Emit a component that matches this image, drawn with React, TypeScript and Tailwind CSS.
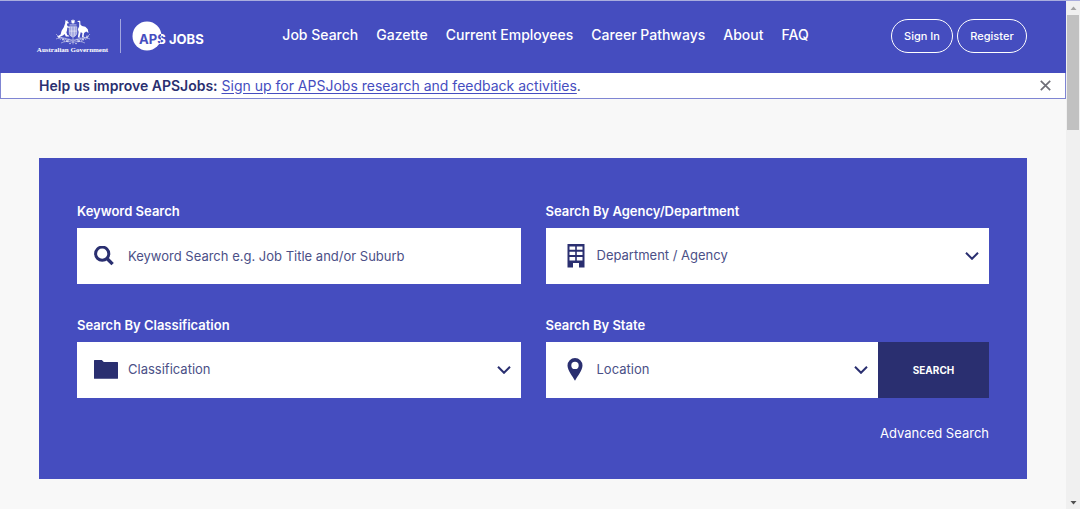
import { useState } from 'react';
import type { ReactNode } from 'react';

const navLinks = ['Job Search', 'Gazette', 'Current Employees', 'Career Pathways', 'About', 'FAQ'];

function CoatOfArms() {
  return (
    <svg className="h-7 w-9" viewBox="0 0 36 27" fill="#fff" aria-hidden="true">
      {/* Star */}
      <path d="M18 0.6l.6 1.3 1.4-.3-.6 1.3 1.1.9-1.4.3v1.4L18 4.600l-1.100.9v-1.400l-1.400-.3 1.100-.9-.6-1.300 1.400.3z" />
      <path d="M14.500 6h7v.9h-7z" opacity=".8" />
      {/* Kangaroo */}
      <path d="M10.600 1.200l.9 1.300.9-1 .1 1.500 1.300 1-.4.900-1.500.2.500 2.400 2.200.9-.2.900-2.100-.4-.3 3-.6 2 .9 2.600 1.900.7v.8H10.900l-1.400-2.600-1.200 1.300-3.600 1.700-2.300-.2 3.200-2.200 1-3.700 2.200-3.600 1.300-3.700z" />
      {/* Shield */}
      <path d="M14.200 8.200h7.600v6c0 2.200-1.500 3.500-3.800 4.600-2.300-1.100-3.800-2.400-3.800-4.600z" opacity=".5" />
      <path d="M14.200 8.200h7.600v6c0 2.200-1.500 3.500-3.800 4.600-2.300-1.100-3.800-2.400-3.800-4.600zM14.200 12.600h7.600M16.700 8.200v9.400M19.300 8.200v9.400" fill="none" stroke="#fff" strokeWidth=".5" />
      {/* Emu */}
      <path d="M22.700 2.700l1.500-.7 1.100.8.100 3.300 1.600 1.500 3.300.6 2.500 2.600.7 3.600-2.300-1.300-2.100 1.300-.6 3.500 1.500.9h-3l.4-4.400-1.700-.7-1.100 4.500 1 .8h-2.800l.9-5.600-.9-2.600 1.300-2.900.2-4-.5-.5-1.500.2z" />
      {/* Wattle */}
      <g fill="none" stroke="#fff" strokeWidth=".6" opacity=".75">
        <path d="M1 15.500c3 3.800 8 5.500 17 6 9-.5 14-2.200 17-6" />
        <path d="M1 20.500c5-2.500 11-1 17 2.500 6-3.500 12-5 17-2.500" />
        <path d="M6 24.500c4-2 8-2 12-.5 4-1.500 8-1.500 12 .5" />
        <path d="M2 18l3-.5M5 21.500l2-3M9 23.500l1.500-3.500M13 24l1-4M34 18l-3-.5M31 21.500l-2-3M27 23.500L25.500 20M23 24l-1-4M18 19v7" />
      </g>
      <g opacity=".75">
        <circle cx="4" cy="19" r=".9" />
        <circle cx="8" cy="21" r="1" />
        <circle cx="12" cy="22.500" r="1" />
        <circle cx="15" cy="25" r=".8" />
        <circle cx="21" cy="25" r=".8" />
        <circle cx="24" cy="22.500" r="1" />
        <circle cx="28" cy="21" r="1" />
        <circle cx="32" cy="19" r=".9" />
      </g>
    </svg>
  );
}

function ApsLogo() {
  return (
    <svg className="h-[30px] w-[76px]" viewBox="0 0 76 30" role="img" aria-label="APS Jobs">
      <defs>
        {/* blue inside the circle, white past its edge */}
        <radialGradient id="aps-ink" gradientUnits="userSpaceOnUse" cx="15" cy="15" r="14.500">
          <stop offset="1" stopColor="#454dbf" />
          <stop offset="1" stopColor="#fff" />
        </radialGradient>
      </defs>
      <circle cx="15" cy="15" r="14.500" fill="#fff" />
      <text x="7" y="23" fontSize="13" fontWeight="700" fontFamily="Inter, sans-serif" fill="url(#aps-ink)">APS</text>
      <text x="37" y="23" fontSize="13" fontWeight="700" fontFamily="Inter, sans-serif" fill="#fff">JOBS</text>
    </svg>
  );
}

function SearchIcon() {
  return (
    <svg className="h-5 w-5" viewBox="0 0 20 20" fill="none" stroke="#2a2f70" aria-hidden="true">
      <circle cx="8.200" cy="7.700" r="6.600" strokeWidth="3" />
      <path d="M13 12.500l5.600 5.600" strokeWidth="3.400" />
    </svg>
  );
}

function BuildingIcon() {
  return (
    <svg className="h-6 w-[18px]" viewBox="0 0 18 24" aria-hidden="true">
      <path
        fill="#2a2f70"
        fillRule="evenodd"
        d="M.5 0h17v23.500h-5.500v-4.500H6v4.500H.5zM2.500 2.500v3.200h5.700V2.500zM9.800 2.500v3.200h5.700V2.500zM2.500 7.700v3.300h5.700V7.700zM9.800 7.700v3.300h5.700V7.700zM2.500 13v3.500h5.700V13zM9.800 13v3.500h5.700V13z"
      />
    </svg>
  );
}

function FolderIcon() {
  return (
    <svg className="h-5 w-6" viewBox="0 0 24 20" aria-hidden="true">
      <path fill="#2a2f70" d="M.6 0h7.200l2 2h13.600q.6 0 .6.600v15.600q0 .6-.6.600H.6q-.6 0-.6-.6V.6Q0 0 .6 0z" />
    </svg>
  );
}

function PinIcon() {
  return (
    <svg className="h-6 w-4" viewBox="0 0 16 24" aria-hidden="true">
      <path
        fill="#2a2f70"
        fillRule="evenodd"
        d="M8 0a7.500 7.500 0 0 1 7.500 7.500C15.500 12.200 10.500 18.200 8 22.700 5.500 18.200.5 12.200.5 7.500A7.500 7.500 0 0 1 8 0zM8 3.700a3.700 3.700 0 1 0 0 7.400 3.700 3.700 0 0 0 0-7.400z"
      />
    </svg>
  );
}

function Chevron() {
  return (
    <svg className="pointer-events-none h-2 w-[14px] shrink-0" viewBox="0 0 14 8" fill="none" aria-hidden="true">
      <path d="M1 .800l6 6 6-6" stroke="#2a2f70" strokeWidth="2" />
    </svg>
  );
}

function Field({ id, label, icon, children }: { id: string; label: string; icon: ReactNode; children: ReactNode }) {
  return (
    <div>
      <label htmlFor={id} className="block text-[13px] leading-4 font-semibold text-white">
        {label}
      </label>
      <div className="mt-[9px] flex h-14">
        <div className="flex min-w-0 flex-1 items-center bg-white pr-[10px] pl-[17px]">
          <span className="flex w-[34px] shrink-0">{icon}</span>
          {children}
        </div>
        {id === 'state' && (
          <button className="w-[111px] bg-[#2a2f70] text-[10px] font-bold text-white">SEARCH</button>
        )}
      </div>
    </div>
  );
}

function SelectBox({ id, placeholder }: { id: string; placeholder: string }) {
  return (
    <>
      <select id={id} className="h-full min-w-0 flex-1 appearance-none bg-transparent text-[13px] text-[#4b5087] outline-none">
        <option>{placeholder}</option>
      </select>
      <Chevron />
    </>
  );
}

export default function App() {
  const [showBanner, setShowBanner] = useState(true);

  return (
    <div className="flex min-h-screen border-t border-[#a9adde] bg-[#f8f8f8] font-['Inter',sans-serif]">
      <div className="min-w-0 flex-1">
        {/* Header */}
        <header className="flex h-18 items-center justify-between bg-[#454dbf] px-[39px] pb-[2px] text-white">
          <a href="#" className="flex items-center">
            <span className="flex w-[67px] flex-col items-center">
              <CoatOfArms />
              <span className="font-['Liberation_Serif',serif] text-[7px] leading-[8px] font-bold whitespace-nowrap">
                Australian Government
              </span>
            </span>
            <span className="mr-[11px] ml-[14px] h-[34px] w-px bg-[#a2a6df]" />
            <ApsLogo />
          </a>
          <nav className="flex gap-[18px] pr-2 pb-[2px] text-[14px] leading-5 font-medium whitespace-nowrap">
            {navLinks.map((link) => (
              <a key={link} href="#">
                {link}
              </a>
            ))}
          </nav>
          <div className="flex gap-1 text-[11px] font-medium">
            <button className="h-[34px] w-[62px] rounded-full border border-white">Sign In</button>
            <button className="h-[34px] w-[70px] rounded-full border border-white">Register</button>
          </div>
        </header>

        {/* Feedback banner */}
        {showBanner && (
          <div className="flex h-[26px] items-center justify-between border border-t-0 border-[#7f85d3] bg-white pr-[14px] pl-[38px]">
            <p className="text-[14px] leading-5 text-[#2a2f70]">
              <strong className="font-semibold">Help us improve APSJobs:</strong>{' '}
              <a href="#" className="text-[#454dbf] underline underline-offset-2">
                Sign up for APSJobs research and feedback activities
              </a>
              .
            </p>
            <button aria-label="Close" onClick={() => setShowBanner(false)}>
              <svg className="h-[11px] w-[11px]" viewBox="0 0 11 11" stroke="#6f6f78" strokeWidth="1.700">
                <path d="M.8.800l9.400 9.400M10.200.800L.8 10.200" />
              </svg>
            </button>
          </div>
        )}

        {/* Search panel */}
        <main className="px-[39px] pt-[59px] pb-[30px]">
          <form className="bg-[#454dbf] px-[38px] pt-[45px] pb-9" onSubmit={(e) => e.preventDefault()}>
            <div className="grid grid-cols-2 gap-x-[25px] gap-y-[33px]">
              <Field id="keyword" label="Keyword Search" icon={<SearchIcon />}>
                <input
                  id="keyword"
                  type="text"
                  placeholder="Keyword Search e.g. Job Title and/or Suburb"
                  className="h-full min-w-0 flex-1 text-[13px] text-[#2a2f70] outline-none placeholder:text-[#4b5087]"
                />
              </Field>
              <Field id="agency" label="Search By Agency/Department" icon={<span className="pl-1"><BuildingIcon /></span>}>
                <SelectBox id="agency" placeholder="Department / Agency" />
              </Field>
              <Field id="classification" label="Search By Classification" icon={<FolderIcon />}>
                <SelectBox id="classification" placeholder="Classification" />
              </Field>
              <Field id="state" label="Search By State" icon={<span className="pl-1"><PinIcon /></span>}>
                <SelectBox id="state" placeholder="Location" />
              </Field>
            </div>
            <div className="mt-[25px] text-right text-[13px] leading-5 text-white">
              <a href="#">Advanced Search</a>
            </div>
          </form>
        </main>
      </div>

      {/* Scrollbar */}
      <div className="flex w-[14px] flex-col items-center justify-between bg-[#f0f0f0]" aria-hidden="true">
        <div className="flex w-full flex-col items-center">
          <svg className="h-[14px] w-[7px]" viewBox="0 0 7 14" fill="#a3a3a3">
            <path d="M.5 9h6L3.500 5.500z" />
          </svg>
          <div className="h-[115px] w-3 bg-[#c1c1c1]" />
        </div>
        <svg className="h-[14px] w-[7px]" viewBox="0 0 7 14" fill="#505050">
          <path d="M.5 6h6L3.500 9.500z" />
        </svg>
      </div>
    </div>
  );
}
